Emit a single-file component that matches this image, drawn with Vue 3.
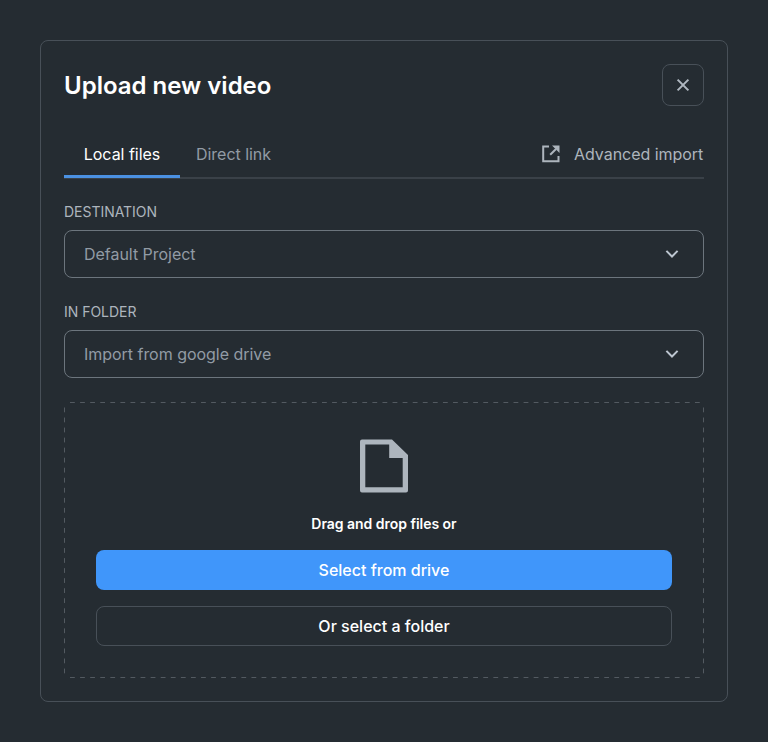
<script setup>
import { ref } from 'vue'

const tabs = ['Local files', 'Direct link']
const activeTab = ref('Local files')
const fields = [
  { label: 'DESTINATION', value: 'Default Project' },
  { label: 'IN FOLDER', value: 'Import from google drive' },
]
</script>

<template>
  <main class="page">
    <section class="dialog">
      <header class="header">
        <h1 class="title">Upload new video</h1>
        <button class="close" aria-label="Close">
          <svg width="14" height="14" viewBox="0 0 14 14"><path d="M1.6 1.6 12.4 12.4M12.4 1.6 1.6 12.4" /></svg>
        </button>
      </header>

      <nav class="tabs">
        <button
          v-for="tab in tabs"
          :key="tab"
          class="tab"
          :class="{ active: tab === activeTab }"
          @click="activeTab = tab"
        >{{ tab }}</button>
        <a class="advanced">
          <svg width="18" height="18" viewBox="0 0 18 18">
            <path class="frame" d="M7 1.5H1.2V16.3H16.5V11" />
            <path class="frame" d="M8.2 9.8 14 4" />
            <path class="head" d="M10 .5H17.5V8Z" />
          </svg>
          <span>Advanced import</span>
        </a>
      </nav>

      <div v-for="field in fields" :key="field.label" class="field">
        <label class="label">{{ field.label }}</label>
        <button class="select">
          <span>{{ field.value }}</span>
          <svg width="14" height="10" viewBox="0 0 14 10"><path d="M1.4 1.9 7 7.5 12.6 1.9" /></svg>
        </button>
      </div>

      <div class="dropzone">
        <svg class="outline" width="640" height="276">
          <path class="across" d="M6 .5H636M6 275.5H636" />
          <path class="down" d="M.5 5.5V272M639.5 5.5V272" />
        </svg>
        <svg class="file" width="48" height="54" viewBox="0 0 48 54">
          <path fill-rule="evenodd" d="M2 .5H32L48 16V51.5Q48 53.5 46 53.5H2Q0 53.5 0 51.5V2.5Q0 .5 2 .5ZM5.3 5.5V48.3H42.7V19H29.2V5.5Z" />
        </svg>
        <p class="hint">Drag and drop files or</p>
        <button class="action primary">Select from drive</button>
        <button class="action">Or select a folder</button>
      </div>
    </section>
  </main>
</template>

<style>
body {
  background: #252c32;
}
</style>

<style scoped>
.page {
  box-sizing: border-box;
  height: 742px;
  padding: 40px;
  background: #252c32;
  font-family: Inter, "Liberation Sans", sans-serif;
  letter-spacing: -0.03px;
  color: #fff;
}
button {
  box-sizing: border-box;
  margin: 0;
  padding: 0;
  border: 0;
  background: none;
  color: inherit;
  font: inherit;
  letter-spacing: inherit;
}
svg {
  display: block;
  fill: none;
}
.dialog {
  box-sizing: border-box;
  height: 662px;
  padding: 23px;
  border: 1px solid #485058;
  border-radius: 8px;
}
.header {
  display: flex;
  justify-content: space-between;
  height: 42px;
}
.title {
  margin: 0;
  font-size: 24px;
  line-height: 43px;
  font-weight: 600;
  letter-spacing: 0;
}
.close {
  display: flex;
  align-items: center;
  justify-content: center;
  width: 42px;
  height: 42px;
  border: 1px solid #485058;
  border-radius: 8px;
}
.close svg {
  stroke: #b0b8c1;
  stroke-width: 2;
}
.tabs {
  display: flex;
  box-sizing: border-box;
  height: 49px;
  margin-top: 24px;
  box-shadow: inset 0 -2px #3a4148;
  font-size: 16px;
  line-height: 48px;
  color: #929ba5;
}
.tab {
  height: 48px;
  padding: 0 16px;
}
.tab.active {
  width: 116px;
  padding: 0;
  color: #fff;
  box-shadow: inset 0 -3px #4b91e2;
}
.advanced {
  display: flex;
  align-items: center;
  gap: 14px;
  height: 48px;
  margin-left: auto;
  padding-right: 0.7px;
  color: #adb5bd;
}
.frame {
  stroke: #adb5bd;
  stroke-width: 2;
}
.head {
  fill: #adb5bd;
}
.field {
  margin-top: 24px;
}
.label {
  display: block;
  height: 28px;
  font-size: 14px;
  line-height: 20px;
  color: #adb5bd;
}
.tabs + .field {
  margin-top: 23px;
}
.select {
  display: flex;
  align-items: center;
  justify-content: space-between;
  width: 100%;
  height: 48px;
  padding: 0 24px 0 19px;
  border: 1px solid #6c757d;
  border-radius: 8px;
  font-size: 16px;
  color: #929ba5;
}
.select svg {
  stroke: #bdc6d0;
  stroke-width: 2;
}
.dropzone {
  position: relative;
  display: flex;
  flex-direction: column;
  align-items: center;
  box-sizing: border-box;
  height: 276px;
  margin-top: 24px;
  padding: 37px 32px 32px;
}
.outline {
  position: absolute;
  inset: 0;
  stroke: #535a61;
}
.across {
  stroke-dasharray: 4.8 5.28;
}
.down {
  stroke-dasharray: 4.8 5.24;
}
.file {
  fill: #adb5bd;
}
.hint {
  margin: 21px 0 16px;
  font-size: 14px;
  line-height: 20px;
  font-weight: 600;
}
.action {
  width: 100%;
  height: 40px;
  border: 1px solid #485058;
  border-radius: 8px;
  font-size: 16px;
  font-weight: 500;
  letter-spacing: 0;
}
.action + .action {
  margin-top: 16px;
}
.primary {
  border: 0;
  background: #4096fa;
}
</style>
